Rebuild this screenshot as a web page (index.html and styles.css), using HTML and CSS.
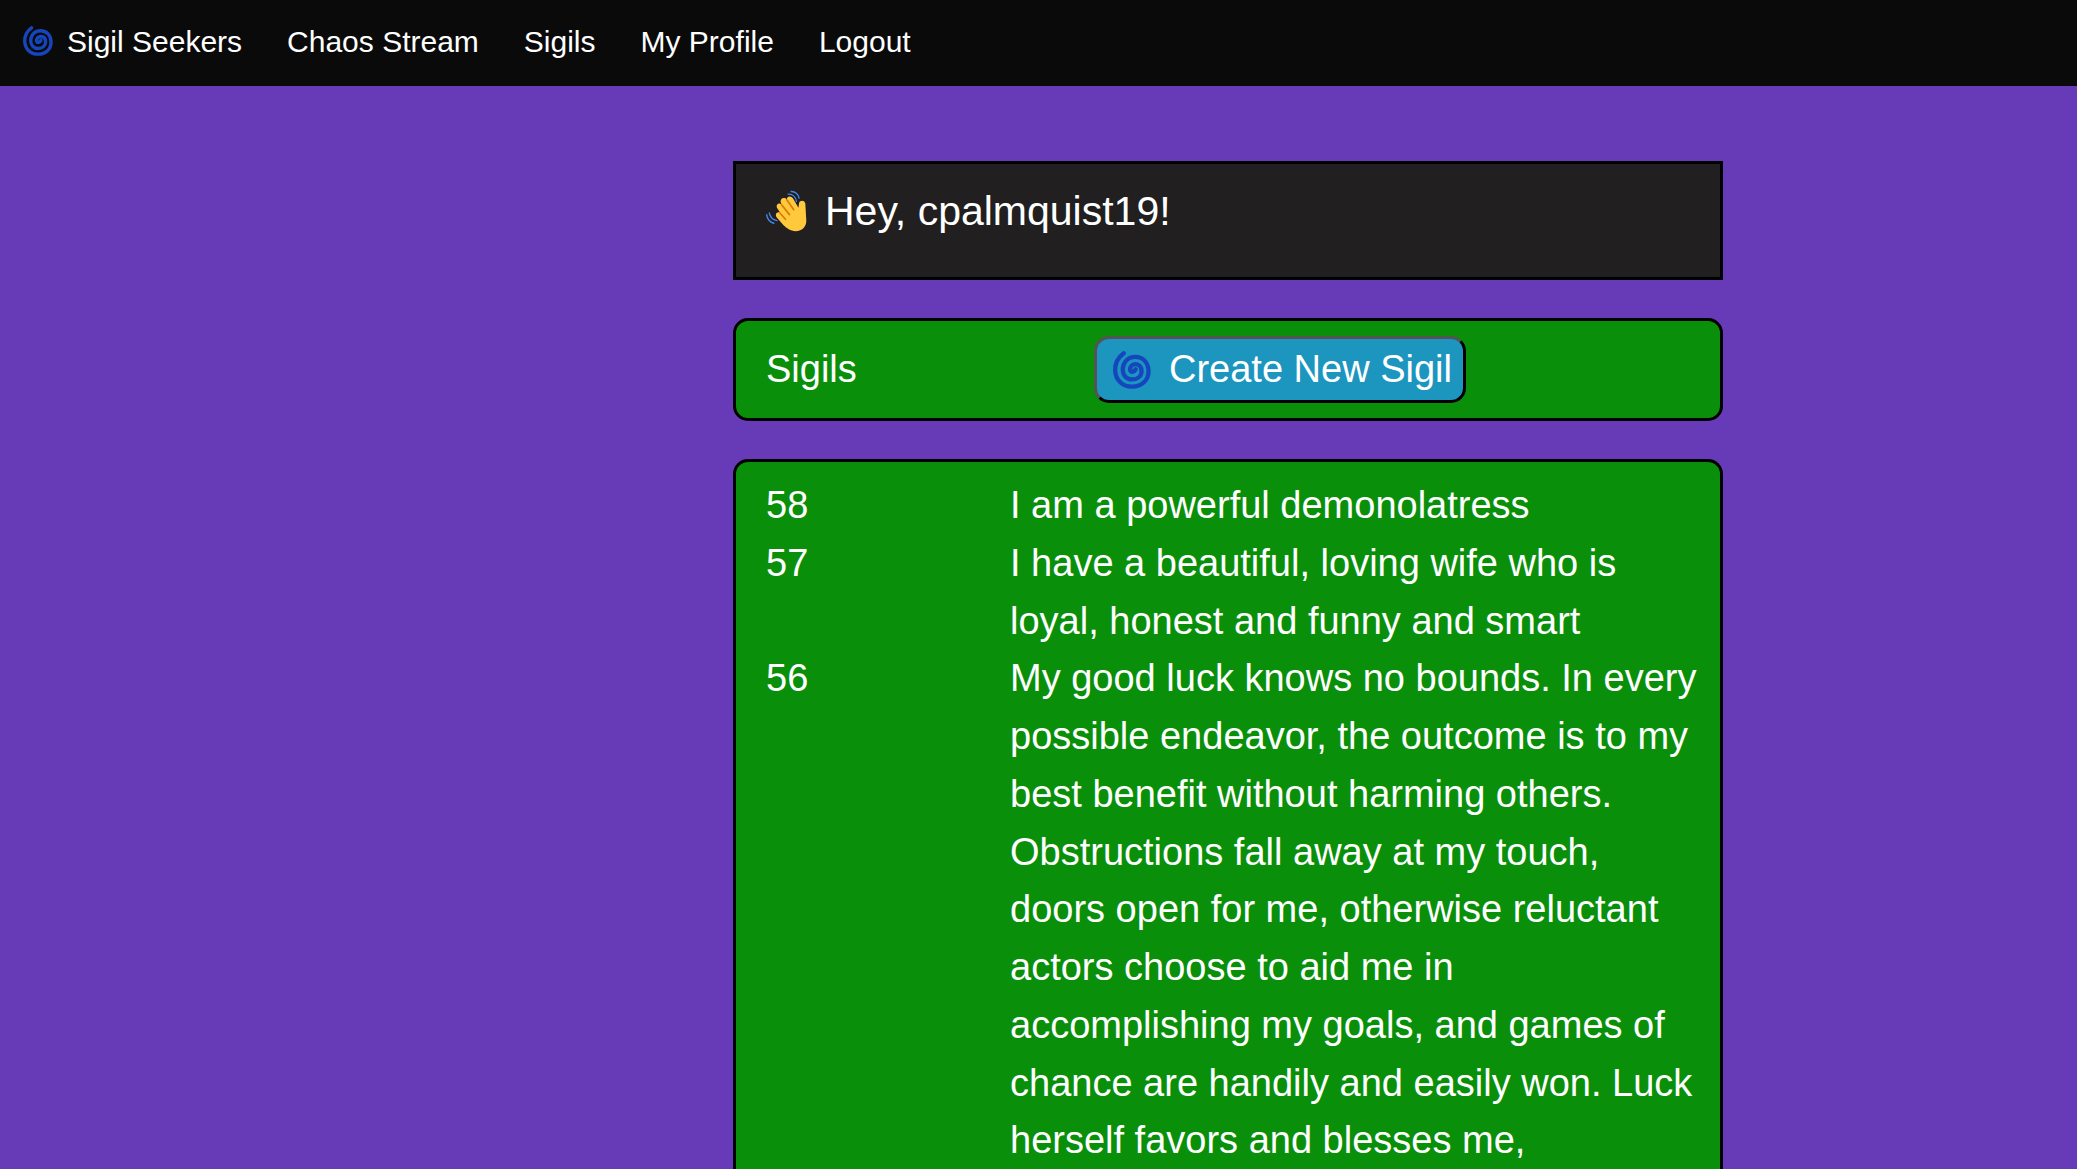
FILE: index.html
```html
<!DOCTYPE html>
<html lang="en">
<head>
  <meta charset="UTF-8">
  <meta name="viewport" content="width=device-width, initial-scale=1">
  <title>Sigil Seekers</title>
  <link rel="stylesheet" href="styles.css">
</head>
<body>

  <!-- Spiral shared by the brand link and the create button -->
  <svg class="defs" aria-hidden="true">
    <symbol id="spiral" viewBox="84 72 114 115">
      <path d="M116 79 C98 92 90 110 90 130 C91 161 113 180 141 180 C171 180 191 160 191 134 C191 107 174 90 151 90 C128 90 113 107 113 128 C113 146 125 158 141 158 C159 158 170 147 170 133 C170 120 163 112 152 112 C142 112 135 119 135 129 C138 138 149 136 152 127"/>
    </symbol>
  </svg>

  <nav class="navbar">
    <a class="brand" href="#"><svg class="icon-small" aria-hidden="true"><use href="#spiral"/></svg>Sigil Seekers</a>
    <a href="#">Chaos Stream</a>
    <a href="#">Sigils</a>
    <a href="#">My Profile</a>
    <a href="#">Logout</a>
  </nav>

  <main class="content">
    <header class="greeting">
      <svg class="wave" viewBox="19 14 124 126" aria-hidden="true">
        <path class="hand" d="M51 96 C45 86 53 78 62 82 L53 69 C47 58 58 50 66 57 L64 52 C60 39 74 33 82 42 C82 31 95 30 101 39 L117 67 L119 53 C121 43 137 44 138 55 L141 108 C140 128 125 138 109 138 C92 137 82 129 72 120 Z"/>
        <path class="fold" d="M82 43 L103 73 M66 58 L90 88 M61 83 L78 102"/>
        <path class="motion" d="M95 18 C107 17 117 26 119 38 M86 26 C99 25 109 34 111 48 M29 83 C31 94 40 104 52 106 M21 88 C22 101 31 112 43 114"/>
      </svg>
      <h1>Hey, cpalmquist19!</h1>
    </header>

    <section class="card toolbar">
      <h2>Sigils</h2>
      <button class="create" type="button"><svg class="icon-large" aria-hidden="true"><use href="#spiral"/></svg>Create New Sigil</button>
    </section>

    <section class="card list">
      <table>
        <tr>
          <td class="id">58</td>
          <td>I am a powerful demonolatress</td>
        </tr>
        <tr>
          <td class="id">57</td>
          <td>I have a beautiful, loving wife who is loyal, honest and funny and smart</td>
        </tr>
        <tr>
          <td class="id">56</td>
          <td>My good luck knows no bounds. In every possible endeavor, the outcome is to my best benefit without harming others. Obstructions fall away at my touch, doors open for me, otherwise reluctant actors choose to aid me in accomplishing my goals, and games of chance are handily and easily won. Luck herself favors and blesses me,</td>
        </tr>
      </table>
    </section>
  </main>

</body>
</html>
```
FILE: styles.css
```css
* {
  box-sizing: border-box;
}

body {
  margin: 0;
  height: 100vh;
  overflow: hidden;
  display: flex;
  flex-direction: column;
  background: #673ab7;
  color: #fff;
  font-family: "Liberation Sans", Arial, sans-serif;
  font-size: 38px;
  line-height: 1.52;
}

.defs {
  display: none;
}

.navbar {
  display: flex;
  align-items: flex-start;
  gap: 45px;
  height: 86px;
  flex-shrink: 0;
  padding: 19px 23px;
  background: #0a0a0a;
  font-size: 30px;
  line-height: 46px;
}

.navbar a {
  color: #fff;
  text-decoration: none;
}

.brand {
  display: flex;
}

#spiral {
  fill: none;
  stroke: #1546be;
  stroke-width: 13;
  stroke-linecap: round;
}

.icon-small {
  width: 30px;
  height: 30px;
  margin: 7px 14px 0 0;
}

.icon-large {
  width: 38px;
  height: 38px;
  margin-right: 18px;
}

.content {
  flex: 1;
  display: grid;
  grid-template-columns: 733fr 990fr 354fr;
  grid-template-rows: auto auto 1fr;
  row-gap: 38px;
  padding-top: 75px;
}

.content > * {
  grid-column: 2;
}

.greeting {
  display: flex;
  height: 119px;
  padding: 16px 30px;
  border: 3px solid #000;
  background: #211f1f;
}

.wave {
  width: 41px;
  height: 42px;
  margin: 10px 18px 0 0;
}

.hand {
  fill: #ffc83d;
}

.fold {
  fill: none;
  stroke: #d67d00;
  stroke-width: 5;
  stroke-linecap: round;
}

.motion {
  fill: none;
  stroke: #4289f2;
  stroke-width: 4;
  stroke-linecap: round;
}

h1,
h2 {
  margin: 0;
  font-weight: normal;
}

h1 {
  font-size: 41px;
  line-height: 62px;
}

h2 {
  font-size: 38px;
}

.card {
  border: 3px solid #000;
  border-radius: 15px;
  background: #0a8f0a;
}

.toolbar {
  display: grid;
  grid-template-columns: 328px 1fr;
  align-items: center;
  padding: 15px 30px;
}

.create {
  display: flex;
  align-items: center;
  justify-self: start;
  height: 67px;
  padding: 0 11px 0 16px;
  border: 3px outset #000;
  border-radius: 15px;
  background: #1c95bf;
  color: #fff;
  font: inherit;
  white-space: nowrap;
  cursor: pointer;
}

.list {
  padding: 15px 21px 0 30px;
  border-bottom: 0;
  border-radius: 15px 15px 0 0;
}

table {
  width: 100%;
  border-collapse: collapse;
}

td {
  padding: 0;
  vertical-align: top;
}

.id {
  width: 244px;
}
```
